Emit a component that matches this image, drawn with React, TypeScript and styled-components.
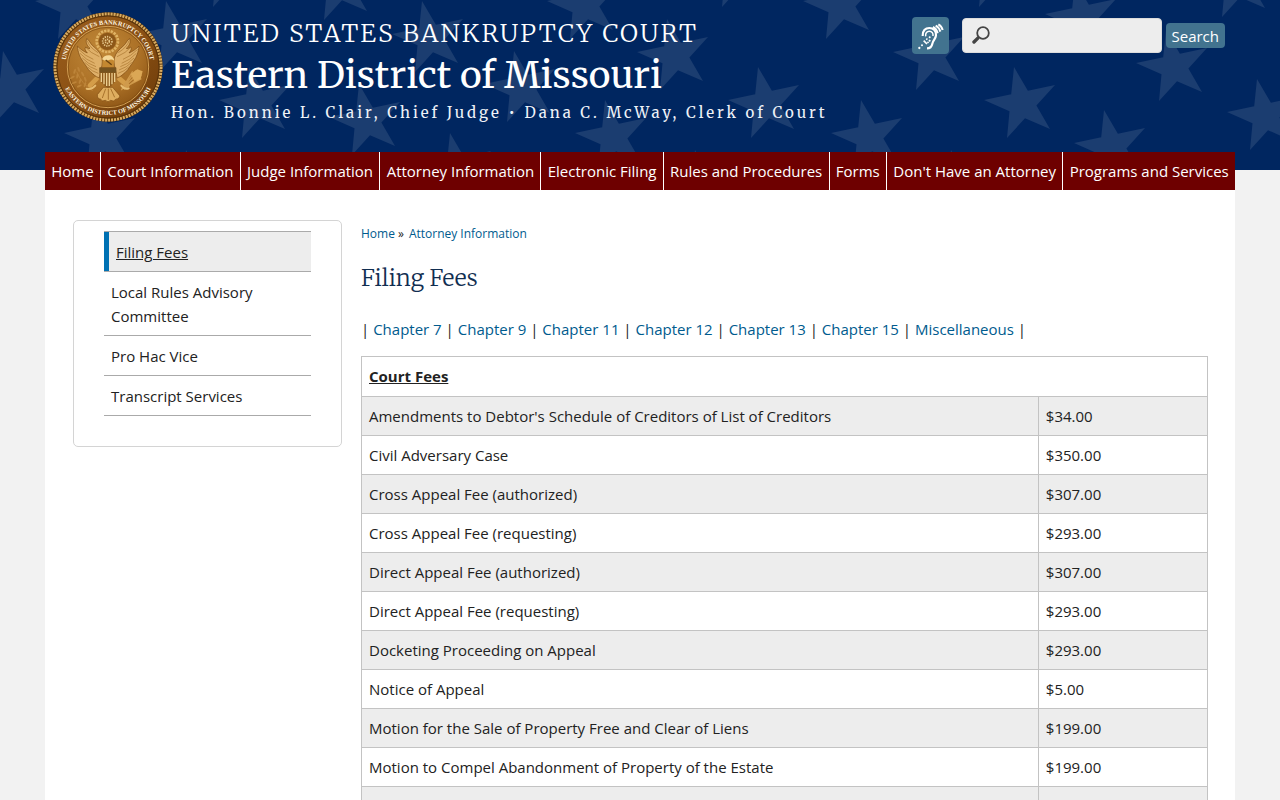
import React from "react";
import styled, { createGlobalStyle } from "styled-components";

const sans = `"Open Sans", "Noto Sans", sans-serif`;
const serif = `Merriweather, "DejaVu Serif Condensed", "DejaVu Serif", serif`;

const GlobalStyle = createGlobalStyle`
  *, *::before, *::after { box-sizing: border-box; }
  body {
    margin: 0;
    background: #f2f2f2;
    color: #222;
    font-family: ${sans};
    font-size: 15px;
    line-height: 24px;
  }
  a { color: #005b8e; text-decoration: none; }
`;

const Page = styled.div`
  position: relative;
  min-height: 100vh;
`;

const Backdrop = styled.div`
  position: absolute;
  top: 0;
  left: 0;
  right: 0;
  height: 170px;
  background: #002660;
  overflow: hidden;

  svg { display: block; width: 100%; height: 170px; }
`;

const Wrap = styled.div`
  position: relative;
  margin: 0 45px;
`;

const Header = styled.header`
  display: flex;
  align-items: flex-start;
  height: 152px;
  padding: 12px 10px 0 8px;
`;

const SealLink = styled.a`
  flex: none;
  display: block;
  margin-right: 8px;

  svg { display: block; }
`;

const Titles = styled.div`
  flex: 1;
  color: #fff;
  font-family: ${serif};
  white-space: nowrap;
`;

const Court = styled.div`
  font-size: 25px;
  font-weight: 300;
  line-height: 42px;
  letter-spacing: 2px;
`;

const District = styled.div`
  font-size: 37px;
  line-height: 42px;
`;

const Officers = styled.div`
  font-size: 15px;
  line-height: 34px;
  letter-spacing: 3px;
  color: #eef2f8;
`;

const Tools = styled.form`
  flex: none;
  display: flex;
  align-items: flex-start;
  padding-top: 5px;
`;

const ListenLink = styled.a`
  display: block;
  width: 37px;
  height: 37px;
  margin-right: 13px;
  border-radius: 4px;
  background: #42738f;
  color: #fff;

  svg { display: block; }
`;

const SearchBox = styled.label`
  display: flex;
  align-items: center;
  width: 200px;
  height: 35px;
  margin-top: 1px;
  padding: 0 8px 0 9px;
  border-radius: 4px;
  border: 1px solid #dcdcdc;
  background: #ededed;

  svg { flex: none; margin-bottom: 2px; }
`;

const SearchInput = styled.input`
  flex: 1;
  min-width: 0;
  margin: 0 0 0 8px;
  padding: 0;
  border: 0;
  outline: 0;
  background: transparent;
  font: inherit;
`;

const SearchButton = styled.button`
  height: 25px;
  margin: 6px 0 0 4px;
  padding: 0 6px;
  border: 0;
  border-radius: 4px;
  background: #42738f;
  color: #fff;
  font-family: ${sans};
  font-size: 15px;
  line-height: 24px;
`;

const Nav = styled.nav`
  display: flex;
  background: #6e0000;
`;

const NavLink = styled.a`
  flex: 1 1 auto;
  height: 38px;
  color: #fff;
  line-height: 38px;
  text-align: center;
  white-space: nowrap;

  & + & { border-left: 1px solid #fff; }
`;

const Body = styled.div`
  display: grid;
  grid-template-columns: 269px minmax(0, 1fr);
  column-gap: 19px;
  align-items: start;
  min-height: calc(100vh - 190px);
  padding: 30px 27px 0 28px;
  background: #fff;
`;

const SideCard = styled.aside`
  padding: 10px 30px 30px;
  border: 1px solid #d4d4d4;
  border-radius: 5px;
`;

const SideList = styled.ul`
  margin: 0;
  padding: 0;
  list-style: none;
  border-top: 1px solid #aaa;
`;

const SideItem = styled.li<{ $current?: boolean }>`
  border-bottom: 1px solid #aaa;

  a {
    display: block;
    padding: 8px 7px 7px;
    color: #222;
    border-left: ${(p) => (p.$current ? "5px solid #0071b3" : "0")};
    background: ${(p) => (p.$current ? "#ededed" : "transparent")};
    text-decoration: ${(p) => (p.$current ? "underline" : "none")};
  }
`;

const Crumbs = styled.nav`
  padding-top: 4px;
  font-size: 12px;
  line-height: 20px;

  span { margin: 0 5px 0 3px; }
`;

const Title = styled.h1`
  margin: 16px 0 0;
  color: #112e51;
  font-family: ${serif};
  font-size: 23px;
  font-weight: 300;
  line-height: 36px;
`;

const Chapters = styled.p`
  margin: 21px 0 15px;
`;

const FeeTable = styled.table`
  width: 100%;
  border-collapse: collapse;
  table-layout: fixed;
`;

const AmountCol = styled.col`
  width: 20%;
`;

const Heading = styled.th`
  height: 40px;
  padding: 0 7px 1px;
  border: 1px solid #c3c3c3;
  text-align: left;
  text-decoration: underline;
`;

const FeeRow = styled.tr`
  background: #fff;

  &:nth-child(odd) { background: #ededed; }
`;

const Cell = styled.td`
  height: 39px;
  padding: 0 7px;
  border: 1px solid #c3c3c3;
`;

const starCenters = [
  [11, 88], [73, 5], [102, 137], [174, 38], [228, -27], [194, 187], [257, 104],
  [339, -14], [367, 121], [430, 38], [458, 170], [522, 88], [585, 5],
  [613, 137], [675, 56], [703, 187], [737, -27], [766, 104], [841, 5],
  [869, 137], [931, 56], [959, 187], [994, -27], [1022, 104], [1083, 18],
  [1112, 147], [1174, 67], [1237, -17], [1265, 116],
];

function Stars() {
  return (
    <svg viewBox="0 0 1280 170" preserveAspectRatio="xMidYMin slice" aria-hidden="true">
      {starCenters.map(([x, y]) => (
        <polygon
          key={`${x},${y}`}
          transform={`translate(${x} ${y})`}
          points="-8,-37 5.9,-13.2 33,-19 14.4,1.5 28,25 3,14.2 -15,34 -12.5,7.3 -38,-4 -10.8,-9.7"
          fill="#1b3d70"
        />
      ))}
    </svg>
  );
}

const wing =
  "M140 116 C147 118 150 130 158 137 C170 147 182 158 186 174 C189 190 184 204 180 220 L178 234 C164 229 160 222 153 217 C147 212 143 206 139 199 C134 192 130 187 126 180 C120 171 114 158 112 138 C121 148 131 154 142 159 C136 151 133 148 137 141 C144 145 147 147 150 145 C141 137 136 127 140 116 Z";
const feathers =
  "M116 148 Q135 168 160 178 M120 160 Q138 180 164 190 M127 174 Q143 192 168 200 M134 187 Q148 202 172 210 M143 201 Q155 214 175 220 M142 122 Q146 140 174 158 M138 143 Q150 158 178 170";

function Wing() {
  return (
    <>
      <path d={wing} fill="#dfb069" stroke="#7d4a10" strokeWidth="2" />
      <path d={feathers} fill="none" stroke="#a8732c" strokeWidth="2" />
    </>
  );
}

const sprig = [
  [104, 214, 20], [116, 208, -20], [97, 232, 60], [112, 228, 10], [128, 222, -30],
  [103, 248, 70], [120, 244, 20], [136, 238, -20], [118, 258, 65], [135, 254, 20],
];

function Seal() {
  return (
    <svg width="110" height="110" viewBox="39 36 330 330" role="img" aria-label="Court seal">
      <defs>
        <linearGradient id="gold" x1="0" y1="0" x2="1" y2="1">
          <stop offset="0" stopColor="#9c5f1c" />
          <stop offset="0.5" stopColor="#8a5014" />
          <stop offset="1" stopColor="#6b3a08" />
        </linearGradient>
        <radialGradient id="disc" cx="0.42" cy="0.3" r="0.8">
          <stop offset="0" stopColor="#c08838" />
          <stop offset="0.6" stopColor="#ab7026" />
          <stop offset="1" stopColor="#875012" />
        </radialGradient>
        <path id="upper" d="M76 201 A128 128 0 0 1 332 201" />
        <path id="lower" d="M60 201 A144 144 0 0 0 348 201" />
      </defs>
      <circle cx="204" cy="201" r="164" fill="#5b370d" />
      <circle cx="204" cy="201" r="159" fill="none" stroke="#d8ab60" strokeWidth="9" strokeDasharray="6 3" />
      <circle cx="204" cy="201" r="153" fill="url(#gold)" stroke="#5c340a" strokeWidth="3" />
      <circle cx="204" cy="201" r="122" fill="url(#disc)" stroke="#d3a055" strokeWidth="3" />
      <circle cx="204" cy="201" r="119" fill="none" stroke="#7c4a11" strokeWidth="2" />
      <g fill="#fff6e0" fontFamily="'Liberation Serif', serif" fontSize="19" fontWeight="700">
        <text textAnchor="middle">
          <textPath href="#upper" startOffset="50%">UNITED STATES BANKRUPTCY COURT</textPath>
        </text>
        <text textAnchor="middle">
          <textPath href="#lower" startOffset="50%">EASTERN DISTRICT OF MISSOURI</textPath>
        </text>
      </g>
      <circle cx="202" cy="124" r="32" fill="none" stroke="#e0b364" strokeWidth="8" strokeDasharray="7 3" />
      <circle cx="202" cy="124" r="26" fill="#8d5718" />
      <circle cx="202" cy="124" r="14" fill="none" stroke="#e4c58a" strokeWidth="5" strokeDasharray="4 3" />
      <circle cx="202" cy="124" r="6" fill="none" stroke="#e4c58a" strokeWidth="5" strokeDasharray="4 2" />
      <path d="M170 236 L150 256 M238 236 L262 256" stroke="#d49d49" strokeWidth="14" strokeLinecap="round" />
      <Wing />
      <g transform="translate(409 0) scale(-1 1)">
        <Wing />
      </g>
      <path d="M190 262 L218 262 L240 288 Q236 300 228 297 Q222 307 212 301 Q204 310 196 301 Q186 306 181 297 Q172 298 172 284 Z" fill="#dfae5f" stroke="#7d4a10" strokeWidth="2" />
      <path d="M197 266 L187 294 M205 266 L205 299 M212 266 L224 292" stroke="#9a6420" strokeWidth="2.4" />
      <path d="M188 186 Q189 167 203 164 Q221 163 223 181 L220 205 L187 205 Z" fill="#c48831" />
      <path d="M186 178 Q192 165 208 166 Q220 168 223 182 Q214 175 205 181 Q195 184 190 179 Z" fill="#f4d796" />
      <path d="M197 180 L215 194" stroke="#67400f" strokeWidth="4" />
      <path d="M179 202 H228 V232 Q226 253 204 264 Q182 253 179 232 Z" fill="#8d5a1c" />
      <path d="M184 219 V246 M192 219 V253 M200 219 V258 M208 219 V258 M216 219 V253 M224 219 V246" stroke="#edcf91" strokeWidth="4" />
      <path d="M178 203 H229 V218 H178 Z" fill="#75531f" />
      {sprig.map(([x, y, r]) => (
        <ellipse key={`${x},${y}`} cx={x} cy={y} rx="3" ry="8" transform={`rotate(${r} ${x} ${y})`} fill="#bd8439" />
      ))}
      <path d="M110 215 Q125 252 158 272" fill="none" stroke="#bd8439" strokeWidth="3" />
      <path d="M246 266 L294 222 M250 260 L278 214 M250 264 L304 236 M244 270 L288 212 M252 268 L304 226" stroke="#cf9a4c" strokeWidth="4" />
      <path d="M272 222 L292 208 L308 214 L302 236 L284 246 Z" fill="#dba755" />
      <path d="M140 266 Q155 270 166 257 M244 257 Q254 270 266 265" fill="none" stroke="#e5bb70" strokeWidth="6" strokeLinecap="round" />
    </svg>
  );
}

function ListeningEar() {
  return (
    <svg width="37" height="37" viewBox="21 21 111 111" fill="none" stroke="currentColor" aria-hidden="true">
      <path d="M53 78 C52 62 61 54 73 54 C86 54 94 63 93 76 C92 87 84 91 82 101 C80 111 76 115 66 115" strokeWidth="6.5" />
      <path d="M62 79 C61 69 66 64 73 64 C81 64 85 70 84 78" strokeWidth="4.5" />
      <path d="M84 51 Q95 56 98 70 M92 47 Q102 52 106 65 M100 43 Q110 48 113 60" strokeWidth="6" />
      <path d="M56 92 L66 102 M64 86 L67 89 M72 90 L76 94" strokeWidth="5" />
      <g fill="currentColor" stroke="none">
        <circle cx="43" cy="114" r="3.4" />
        <circle cx="51" cy="106" r="3" />
        <circle cx="69" cy="97" r="2.8" />
        <circle cx="74" cy="82" r="3" />
      </g>
    </svg>
  );
}

function Magnifier() {
  return (
    <svg width="18" height="18" viewBox="0 0 18 18" aria-hidden="true">
      <circle cx="11" cy="7" r="5.8" fill="none" stroke="#444" strokeWidth="1.8" />
      <path d="M7 11 L5.5 12.5" stroke="#444" strokeWidth="2" />
      <path d="M5.6 12.4 L2 16" stroke="#444" strokeWidth="3.4" strokeLinecap="round" />
    </svg>
  );
}

const navItems = [
  "Home", "Court Information", "Judge Information", "Attorney Information",
  "Electronic Filing", "Rules and Procedures", "Forms", "Don't Have an Attorney",
  "Programs and Services",
];

const sideItems = ["Filing Fees", "Local Rules Advisory Committee", "Pro Hac Vice", "Transcript Services"];

const chapters = [
  "Chapter 7", "Chapter 9", "Chapter 11", "Chapter 12", "Chapter 13", "Chapter 15", "Miscellaneous",
];

const fees = [
  ["Amendments to Debtor's Schedule of Creditors of List of Creditors", "$34.00"],
  ["Civil Adversary Case", "$350.00"],
  ["Cross Appeal Fee (authorized)", "$307.00"],
  ["Cross Appeal Fee (requesting)", "$293.00"],
  ["Direct Appeal Fee (authorized)", "$307.00"],
  ["Direct Appeal Fee (requesting)", "$293.00"],
  ["Docketing Proceeding on Appeal", "$293.00"],
  ["Notice of Appeal", "$5.00"],
  ["Motion for the Sale of Property Free and Clear of Liens", "$199.00"],
  ["Motion to Compel Abandonment of Property of the Estate", "$199.00"],
  ["", ""],
];

export default function App() {
  return (
    <Page>
      <GlobalStyle />
      <Backdrop>
        <Stars />
      </Backdrop>
      <Wrap>
        <Header>
          <SealLink href="#home">
            <Seal />
          </SealLink>
          <Titles>
            <Court>UNITED STATES BANKRUPTCY COURT</Court>
            <District>Eastern District of Missouri</District>
            <Officers>Hon. Bonnie L. Clair, Chief Judge • Dana C. McWay, Clerk of Court</Officers>
          </Titles>
          <Tools role="search" onSubmit={(e) => e.preventDefault()}>
            <ListenLink href="#listen" aria-label="Assistive listening">
              <ListeningEar />
            </ListenLink>
            <SearchBox>
              <Magnifier />
              <SearchInput type="text" aria-label="Search" />
            </SearchBox>
            <SearchButton type="submit">Search</SearchButton>
          </Tools>
        </Header>
        <Nav>
          {navItems.map((item) => (
            <NavLink href="#nav" key={item}>{item}</NavLink>
          ))}
        </Nav>
        <Body>
          <SideCard>
            <SideList>
              {sideItems.map((item, i) => (
                <SideItem key={item} $current={i === 0}>
                  <a href="#side">{item}</a>
                </SideItem>
              ))}
            </SideList>
          </SideCard>
          <main>
            <Crumbs>
              <a href="#home">Home</a>
              <span>»</span>
              <a href="#attorney">Attorney Information</a>
            </Crumbs>
            <Title>Filing Fees</Title>
            <Chapters>
              |{" "}
              {chapters.map((c) => (
                <React.Fragment key={c}>
                  <a href="#chapter">{c}</a> |{" "}
                </React.Fragment>
              ))}
            </Chapters>
            <FeeTable>
              <colgroup>
                <col />
                <AmountCol />
              </colgroup>
              <thead>
                <tr>
                  <Heading colSpan={2}>Court Fees</Heading>
                </tr>
              </thead>
              <tbody>
                {fees.map(([name, amount]) => (
                  <FeeRow key={name}>
                    <Cell>{name}</Cell>
                    <Cell>{amount}</Cell>
                  </FeeRow>
                ))}
              </tbody>
            </FeeTable>
          </main>
        </Body>
      </Wrap>
    </Page>
  );
}
